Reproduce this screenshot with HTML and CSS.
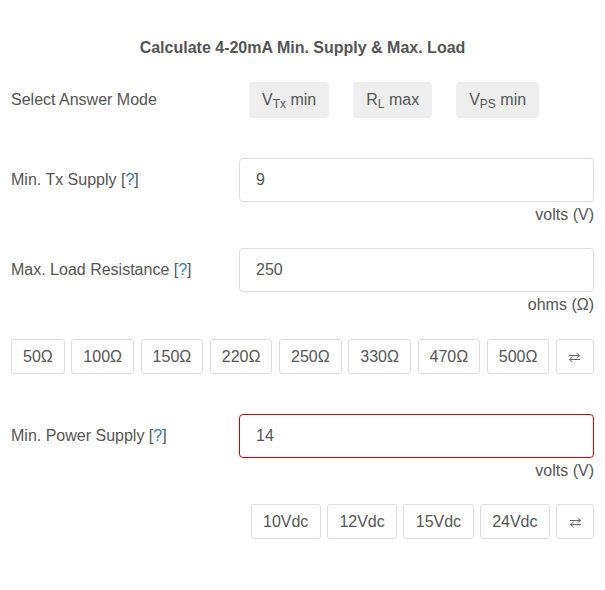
FILE: index.html
```html
<!DOCTYPE html>
<html>
<head>
<meta charset="utf-8">
<link rel="stylesheet" href="styles.css">
</head>
<body>
<div class="calc">
  <h1 class="title">Calculate 4-20mA Min. Supply &amp; Max. Load</h1>

  <div class="row mode-row">
    <div class="label">Select Answer Mode</div>
    <div class="modes">
      <button class="mode">V<sub>Tx</sub> min</button>
      <button class="mode">R<sub>L</sub> max</button>
      <button class="mode">V<sub>PS</sub> min</button>
    </div>
  </div>

  <div class="row field-row first">
    <div class="label">Min. Tx Supply [<span class="help">?</span>]</div>
    <div class="field"><input class="input" type="text" value="9"></div>
  </div>
  <div class="unit">volts (V)</div>

  <div class="row field-row">
    <div class="label">Max. Load Resistance [<span class="help">?</span>]</div>
    <div class="field"><input class="input" type="text" value="250"></div>
  </div>
  <div class="unit">ohms (Ω)</div>

  <div class="chips chips-fill">
    <button class="chip">50Ω</button>
    <button class="chip">100Ω</button>
    <button class="chip">150Ω</button>
    <button class="chip">220Ω</button>
    <button class="chip">250Ω</button>
    <button class="chip">330Ω</button>
    <button class="chip">470Ω</button>
    <button class="chip">500Ω</button>
    <button class="chip swap" aria-label="swap"><svg class="swap-icon" width="13" height="11" viewBox="0 0 13 11"><path d="M1 3.5H11.5M8.5 1L11.5 3.5L8.5 6M12 7.5H1.5M4.5 5L1.5 7.5L4.5 10" fill="none" stroke="#666" stroke-width="1"/></svg></button>
  </div>

  <div class="row field-row third">
    <div class="label">Min. Power Supply [<span class="help">?</span>]</div>
    <div class="field"><input class="input input-error" type="text" value="14"></div>
  </div>
  <div class="unit">volts (V)</div>

  <div class="chips chips-right">
    <button class="chip">10Vdc</button>
    <button class="chip">12Vdc</button>
    <button class="chip">15Vdc</button>
    <button class="chip">24Vdc</button>
    <button class="chip swap" aria-label="swap"><svg class="swap-icon" width="13" height="11" viewBox="0 0 13 11"><path d="M1 3.5H11.5M8.5 1L11.5 3.5L8.5 6M12 7.5H1.5M4.5 5L1.5 7.5L4.5 10" fill="none" stroke="#666" stroke-width="1"/></svg></button>
  </div>
</div>
</body>
</html>
```
FILE: styles.css
```css
* { box-sizing: border-box; }
html, body {
  margin: 0;
  padding: 0;
  background: #fff;
}
body {
  font-family: "Liberation Sans", Arial, sans-serif;
  font-size: 16px;
  color: #555;
}
.calc {
  padding: 38px 11px 20px 11px;
}
.title {
  margin: 0;
  font-size: 16px;
  line-height: 20px;
  font-weight: bold;
  text-align: center;
  color: #555;
}
.row {
  display: flex;
  align-items: center;
}
.label {
  width: 228px;
  flex: none;
  line-height: 20px;
}
.help {
  color: #337ab7;
}
.mode-row {
  margin-top: 24px;
}
.modes {
  display: flex;
  gap: 24px;
  padding-left: 10px;
}
.mode {
  height: 36px;
  padding: 0 13px;
  border: none;
  border-radius: 4px;
  background: #eee;
  color: #555;
  font-family: inherit;
  font-size: 16px;
  line-height: 20px;
}
.mode sub {
  font-size: 12px;
  vertical-align: -3px;
  line-height: 0;
}
.field-row {
  margin-top: 23px;
}
.field-row.first {
  margin-top: 40px;
}
.field-row.third {
  margin-top: 40px;
}
.field {
  flex: 1;
}
.input {
  display: block;
  width: 100%;
  height: 44px;
  padding: 0 16px;
  border: 1px solid #ddd;
  border-radius: 4px;
  font-family: inherit;
  font-size: 16px;
  color: #555;
  background: #fff;
  outline: none;
}
.input-error {
  border-color: #c00;
}
.unit {
  margin-top: 3px;
  text-align: right;
  line-height: 20px;
}
.chips {
  display: flex;
  gap: 5px;
  margin-top: 24px;
}
.chips-fill {
  justify-content: space-between;
}
.chips-fill .chip {
  padding: 0 11px;
}
.chips-right {
  justify-content: flex-end;
  margin-top: 23px;
  gap: 6px;
}
.chip {
  height: 35px;
  padding: 0 11.5px;
  border: 1px solid #ddd;
  border-radius: 3px;
  background: #fff;
  color: #555;
  font-family: inherit;
  font-size: 16px;
  line-height: 20px;
}
.chips .chip.swap {
  width: 38px;
  padding: 0;
  display: flex;
  align-items: center;
  justify-content: center;
}
.swap-icon {
  display: block;
  margin-top: 2px;
}
```
